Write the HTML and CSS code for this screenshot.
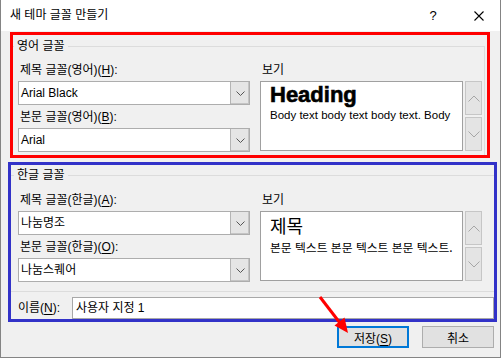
FILE: index.html
```html
<!DOCTYPE html>
<html lang="ko">
<head>
    <meta charset="UTF-8">
    <title>새 테마 글꼴 만들기</title>
    <link rel="stylesheet" href="styles.css">
</head>
<body>
    <div class="dialog">
        <!-- 제목 표시줄 -->
        <div class="titlebar">
            <span class="title">새 테마 글꼴 만들기</span>
            <span class="help">?</span>
            <svg class="close" width="10" height="10" viewBox="0 0 10 10">
                <path d="M0.5 0.5L9.5 9.5M9.5 0.5L0.5 9.5" stroke="#000" stroke-width="1.1" fill="none"/>
            </svg>
        </div>

        <div class="content">
            <!-- 영어 글꼴 -->
            <div class="mark mark-red">
                <fieldset class="group group-en">
                    <legend>영어 글꼴</legend>
                    <div class="fields">
                        <div class="col col-left">
                            <div class="label">제목 글꼴(영어)(<u>H</u>):</div>
                            <div class="combo">
                                <span class="combo-value">Arial Black</span>
                                <span class="combo-btn"><svg width="9" height="5" viewBox="0 0 9 5"><path d="M0.5 0.5L4.5 4.5L8.5 0.5" stroke="#555" fill="none"/></svg></span>
                            </div>
                            <div class="label">본문 글꼴(영어)(<u>B</u>):</div>
                            <div class="combo">
                                <span class="combo-value">Arial</span>
                                <span class="combo-btn"><svg width="9" height="5" viewBox="0 0 9 5"><path d="M0.5 0.5L4.5 4.5L8.5 0.5" stroke="#555" fill="none"/></svg></span>
                            </div>
                        </div>
                        <div class="col col-right">
                            <div class="label">보기</div>
                            <div class="preview-row">
                                <div class="preview preview-en">
                                    <div class="pv-heading">Heading</div>
                                    <div class="pv-body">Body text body text body text. Body</div>
                                </div>
                                <div class="spin">
                                    <span class="spin-btn"><svg width="12" height="7" viewBox="0 0 12 7"><path d="M0.5 6.5L6 1L11.5 6.5" stroke="#a6a6a6" fill="none"/></svg></span>
                                    <span class="spin-btn"><svg width="12" height="7" viewBox="0 0 12 7"><path d="M0.5 0.5L6 6L11.5 0.5" stroke="#a6a6a6" fill="none"/></svg></span>
                                </div>
                            </div>
                        </div>
                    </div>
                </fieldset>
            </div>

            <!-- 한글 글꼴 + 이름 -->
            <div class="mark mark-blue">
                <fieldset class="group group-ko">
                    <legend>한글 글꼴</legend>
                    <div class="fields">
                        <div class="col col-left">
                            <div class="label">제목 글꼴(한글)(<u>A</u>):</div>
                            <div class="combo">
                                <span class="combo-value">나눔명조</span>
                                <span class="combo-btn"><svg width="9" height="5" viewBox="0 0 9 5"><path d="M0.5 0.5L4.5 4.5L8.5 0.5" stroke="#555" fill="none"/></svg></span>
                            </div>
                            <div class="label">본문 글꼴(한글)(<u>O</u>):</div>
                            <div class="combo">
                                <span class="combo-value">나눔스퀘어</span>
                                <span class="combo-btn"><svg width="9" height="5" viewBox="0 0 9 5"><path d="M0.5 0.5L4.5 4.5L8.5 0.5" stroke="#555" fill="none"/></svg></span>
                            </div>
                        </div>
                        <div class="col col-right">
                            <div class="label">보기</div>
                            <div class="preview-row">
                                <div class="preview preview-ko">
                                    <div class="pv-heading">제목</div>
                                    <div class="pv-body">본문 텍스트 본문 텍스트 본문 텍스트.</div>
                                </div>
                                <div class="spin">
                                    <span class="spin-btn"><svg width="12" height="7" viewBox="0 0 12 7"><path d="M0.5 6.5L6 1L11.5 6.5" stroke="#a6a6a6" fill="none"/></svg></span>
                                    <span class="spin-btn"><svg width="12" height="7" viewBox="0 0 12 7"><path d="M0.5 0.5L6 6L11.5 0.5" stroke="#a6a6a6" fill="none"/></svg></span>
                                </div>
                            </div>
                        </div>
                    </div>
                </fieldset>
                <div class="name-row">
                    <span class="name-label">이름(<u>N</u>):</span>
                    <div class="textbox">사용자 지정 1</div>
                </div>
            </div>

            <!-- 버튼 -->
            <div class="actions">
                <button class="btn btn-default">저장(<u>S</u>)</button>
                <button class="btn">취소</button>
            </div>
        </div>

        <!-- 빨간 화살표 표시 -->
        <svg class="arrow" width="501" height="358" viewBox="0 0 501 358">
            <line x1="320" y1="297" x2="340" y2="323" stroke="#f00" stroke-width="3"/>
            <polygon points="348,333 344.5,317.5 334.5,325.5" fill="#f00"/>
        </svg>
    </div>
</body>
</html>
```

FILE: styles.css
```css
/* 새 테마 글꼴 만들기 대화상자 */
body { margin: 0; font-family: "Liberation Sans", "Noto Sans CJK KR", sans-serif; font-size: 12px; color: #000; }
u { text-decoration-thickness: 1px; text-underline-offset: 2px; }

.dialog { position: relative; width: 501px; height: 358px; box-sizing: border-box; border: 1px solid #848484; border-top: none; background: #f0f0f0; display: flex; flex-direction: column; overflow: hidden; }

.titlebar { height: 31px; flex: none; background: #fff; display: flex; align-items: center; padding: 0 16px 0 9px; }
.title { flex: 1; line-height: 31px; }
.help { width: 12px; text-align: center; margin-right: 35px; font-size: 13px; }
.close { display: block; }

.content { flex: 1; display: flex; flex-direction: column; }

.mark { box-sizing: border-box; display: flex; flex-direction: column; }
.mark-red { margin: 1px 0 0 9px; width: 480px; height: 126px; border: 3px solid #f00; }
.mark-blue { margin: 4px 0 0 7px; width: 489px; height: 160px; border: 3px solid #3232c8; }

.group { margin: 0; border: 0; border-top: 1px solid #dcdcdc; min-width: 0; }
.group legend { padding: 0 3px; margin-left: -4px; height: 16px; line-height: 16px; }
.group-en { flex: 1; margin: 3px 2px 0 0; padding: 8px 2px 0 5px; border-right: 1px solid #dcdcdc; }
.group-ko { margin: 2px 0 0 0; padding: 9px 12px 9px 7px; border-bottom: 1px solid #dcdcdc; }

.fields { display: flex; gap: 10px; }
.col { display: flex; flex-direction: column; }
.col-left { width: 232px; flex: none; }
.col-right { flex: 1; }

.label { height: 16px; line-height: 16px; margin-bottom: 3px; padding-left: 2px; white-space: nowrap; }
.combo + .label { margin-top: 4px; }

.combo { height: 24px; box-sizing: border-box; border: 1px solid #adadad; background: #fff; display: flex; }
.combo-value { flex: 1; line-height: 22px; padding-left: 2px; }
.combo-btn { width: 18px; background: #e5e5e5; border-left: 1px solid #b4b4b4; box-shadow: inset -1px -1px 0 #c4c4c4; display: flex; align-items: center; justify-content: center; }

.preview-row { height: 70px; display: flex; gap: 2px; }
.preview { width: 203px; flex: none; box-sizing: border-box; border: 1px solid #a0a0a0; background: #fff; padding-left: 9px; overflow: hidden; white-space: nowrap; }
.preview-en .pv-heading { font-size: 22px; line-height: 26px; font-weight: bold; -webkit-text-stroke: 0.6px #000; }
.preview-en .pv-body { font-size: 11.5px; line-height: 14px; }
.preview-ko .pv-heading { font-family: "Noto Sans CJK KR", sans-serif; font-size: 18px; line-height: 26px; }
.preview-ko .pv-body { font-family: "Noto Sans CJK KR", sans-serif; font-size: 11.8px; line-height: 17px; }

.spin { width: 17px; display: flex; flex-direction: column; gap: 2px; }
.spin-btn { flex: 1; box-sizing: border-box; border: 1px solid #c6c6c6; background: #e4e4e4; display: flex; align-items: center; justify-content: center; }

.name-row { flex: 1; display: flex; align-items: flex-end; padding-left: 7px; }
.name-label { width: 54px; flex: none; line-height: 22px; }
.textbox { flex: 1; height: 22px; box-sizing: border-box; border: 1px solid #a8a8a8; background: #fff; line-height: 20px; padding-left: 3px; }

.actions { display: flex; justify-content: flex-end; gap: 13px; margin-top: 4px; padding-right: 6px; }
.btn { width: 72px; height: 22px; box-sizing: border-box; border: 1px solid #adadad; background: #e1e1e1; padding: 0; font: inherit; color: #000; }
.btn-default { border: 2px solid #0078d7; }

.arrow { position: absolute; left: -1px; top: 0; pointer-events: none; }
```
